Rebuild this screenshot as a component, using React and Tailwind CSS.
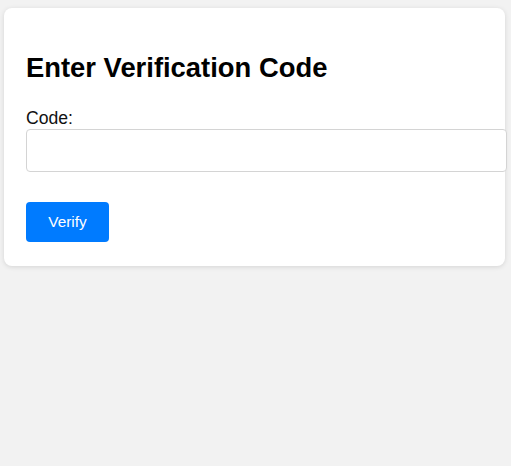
const App = () => {
  return (
    <div className="min-h-[466px] w-full bg-[#f2f2f2] pt-[8px] pl-[4px] font-['Liberation_Sans',Arial,sans-serif]">
      <div className="w-[501px] rounded-[8px] bg-white px-[22px] pt-[22px] pb-[24px] shadow-[0_1px_5px_rgba(0,0,0,0.12)]">
        <h2 className="mt-[23px] text-[27.4px] leading-[30px] font-bold text-black">
          Enter Verification Code
        </h2>
        <label
          htmlFor="code"
          className="mt-[24.6px] block text-[17.6px] leading-[20px] text-[#111]"
        >
          Code:
        </label>
        <input
          id="code"
          type="text"
          className="mt-[1.2px] block h-[43px] w-[481px] rounded-[4px] border border-[#d4d4d4] bg-white px-[11px] text-[17.6px] outline-none"
        />
        <button
          type="button"
          className="mt-[30px] flex h-[40px] w-[83px] items-center justify-center rounded-[4px] bg-[#007bff] text-[15.4px] text-white"
        >
          Verify
        </button>
      </div>
    </div>
  );
};

export default App;
